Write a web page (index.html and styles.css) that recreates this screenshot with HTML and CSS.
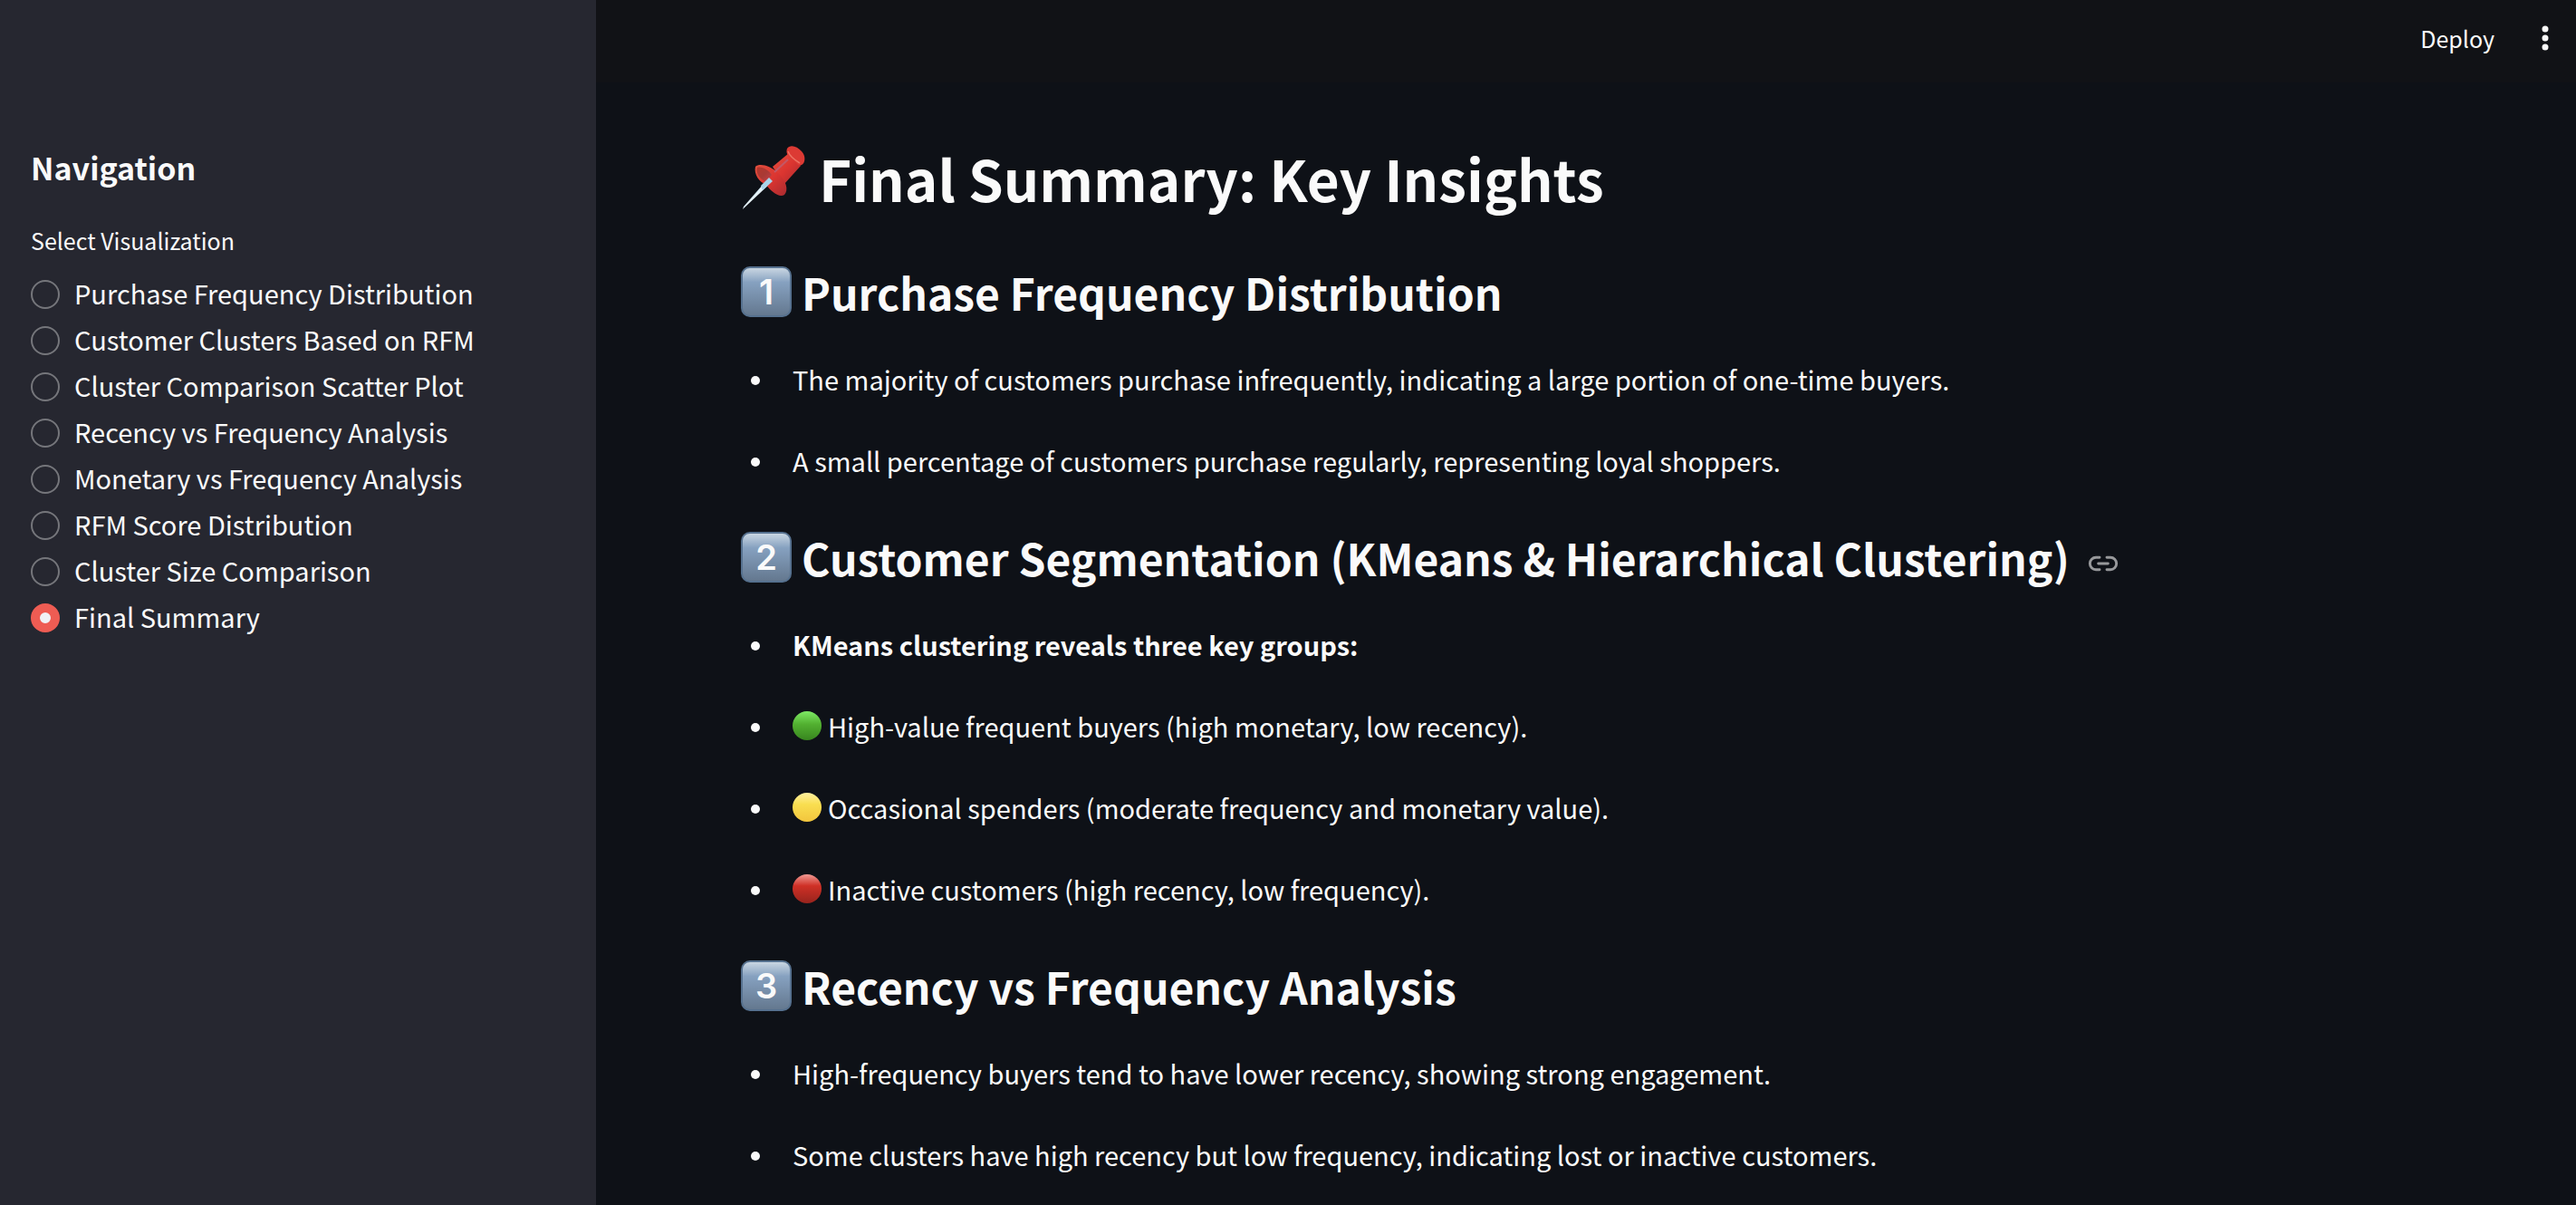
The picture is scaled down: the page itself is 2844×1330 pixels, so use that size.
FILE: index.html
```html
<!DOCTYPE html>
<html lang="en">
<head>
<meta charset="utf-8">
<meta name="viewport" content="width=device-width, initial-scale=1">
<title>Final Summary</title>
<link rel="stylesheet" href="styles.css">
</head>
<body>
<svg class="defs" width="0" height="0" aria-hidden="true">
  <defs>
    <linearGradient id="pin-red" x1="0" y1="0" x2="1" y2="1">
      <stop offset="0" stop-color="#e0503f"/><stop offset=".5" stop-color="#dc3530"/><stop offset="1" stop-color="#a92b30"/>
    </linearGradient>
    <linearGradient id="pin-cup" x1="0" y1="0" x2="1" y2="1">
      <stop offset="0" stop-color="#b5362c"/><stop offset=".5" stop-color="#a83a35"/><stop offset="1" stop-color="#c8404a"/>
    </linearGradient>
    <linearGradient id="pin-steel" x1="0" y1="0" x2="1" y2="1">
      <stop offset="0.3" stop-color="#9fd0ee"/><stop offset=".5" stop-color="#e8f4fa"/><stop offset="1" stop-color="#4a4038"/>
    </linearGradient>
  </defs>
</svg>
<div class="app">
  <aside class="sidebar">
    <h2 class="sidebar-title">Navigation</h2>
    <fieldset class="radio-group">
      <legend>Select Visualization</legend>
      <label class="radio"><input type="radio" name="view"><span>Purchase Frequency Distribution</span></label>
      <label class="radio"><input type="radio" name="view"><span>Customer Clusters Based on RFM</span></label>
      <label class="radio"><input type="radio" name="view"><span>Cluster Comparison Scatter Plot</span></label>
      <label class="radio"><input type="radio" name="view"><span>Recency vs Frequency Analysis</span></label>
      <label class="radio"><input type="radio" name="view"><span>Monetary vs Frequency Analysis</span></label>
      <label class="radio"><input type="radio" name="view"><span>RFM Score Distribution</span></label>
      <label class="radio"><input type="radio" name="view"><span>Cluster Size Comparison</span></label>
      <label class="radio"><input type="radio" name="view" checked><span>Final Summary</span></label>
    </fieldset>
  </aside>
  <div class="page">
    <header class="toolbar">
      <button class="deploy" type="button">Deploy</button>
      <button class="menu" type="button" aria-label="Main menu">
        <svg width="8" height="28" viewBox="0 0 8 28" fill="currentColor"><circle cx="4" cy="4" r="3.5"/><circle cx="4" cy="14" r="3.5"/><circle cx="4" cy="24" r="3.5"/></svg>
      </button>
    </header>
    <main class="content">
      <h1>
        <svg class="pin" width="72" height="72" viewBox="0 0 72 72" aria-hidden="true">
          <path d="M31 36 35 40 4 69 2 71 3 68Z" fill="url(#pin-steel)"/>
          <path d="M35 24 53 9 66 23 48 43Z" fill="url(#pin-red)"/>
          <path d="M16 24C20 20 32 22 41 31 50 39 53 50 48 55 42 59 32 50 28 44 20 41 14 32 16 24Z" fill="url(#pin-red)"/>
          <path d="M18 25C23 23 31 28 34 33L28 41C21 38 16 31 18 25Z" fill="url(#pin-cup)"/>
          <path d="M31 36 35 40 24 50 22 45Z" fill="#a9d3ea"/>
          <path d="M51 4C54-1 62 1 67 7 72 12 71 20 67 22 63 24 61 20 58 16 53 14 49 10 51 4Z" fill="#dc3a34"/>
          <path d="M52 7C54 13 60 17 65 20" fill="none" stroke="#ec7263" stroke-width="1.5"/>
          <path d="M37 30 52 16" fill="none" stroke="#b06a88" stroke-width="2" opacity=".6"/>
        </svg>
        <span>Final Summary: Key Insights</span>
      </h1>
      <section>
        <h2><span class="keycap">1</span><span>Purchase Frequency Distribution</span></h2>
        <ul>
          <li>The majority of customers purchase infrequently, indicating a large portion of one-time buyers.</li>
          <li>A small percentage of customers purchase regularly, representing loyal shoppers.</li>
        </ul>
      </section>
      <section>
        <h2><span class="keycap">2</span><span>Customer Segmentation (KMeans &amp; Hierarchical Clustering)</span>
          <a class="anchor" href="#segmentation" id="segmentation" aria-label="Link to this section">
            <svg width="32" height="32" viewBox="0 0 24 24" fill="none" stroke="currentColor" stroke-width="2.2" stroke-linecap="round"><path d="M15 7h3a5 5 0 0 1 0 10h-3M9 17H6A5 5 0 0 1 6 7h3M8 12h8"/></svg>
          </a>
        </h2>
        <ul>
          <li><strong>KMeans clustering reveals three key groups:</strong></li>
          <li><span class="ball green"></span>High-value frequent buyers (high monetary, low recency).</li>
          <li><span class="ball yellow"></span>Occasional spenders (moderate frequency and monetary value).</li>
          <li><span class="ball red"></span>Inactive customers (high recency, low frequency).</li>
        </ul>
      </section>
      <section>
        <h2><span class="keycap">3</span><span>Recency vs Frequency Analysis</span></h2>
        <ul>
          <li>High-frequency buyers tend to have lower recency, showing strong engagement.</li>
          <li>Some clusters have high recency but low frequency, indicating lost or inactive customers.</li>
        </ul>
      </section>
    </main>
  </div>
</div>
</body>
</html>
```
FILE: styles.css
```css
* { box-sizing: border-box; }
body {
  margin: 0;
  background: #0e1117;
  color: #fafafa;
  font: 29px/48px "Noto Sans CJK JP", "Noto Sans", sans-serif;
}
h1, h2, ul { margin: 0; padding: 0; }
.defs { position: absolute; }
.app { display: flex; height: 100vh; overflow: hidden; }

.sidebar { flex: 0 0 658px; padding: 162px 34px 0; background: #262730; }
.sidebar-title { font-size: 34px; line-height: 46px; }
.radio-group { margin: 0; padding: 0; border: 0; }
.radio-group legend { padding: 33px 0 10px; font-size: 25px; line-height: 48px; }
.radio { display: flex; align-items: center; gap: 16px; height: 51px; white-space: nowrap; }
.radio span { padding-bottom: 3px; }
.radio input {
  appearance: none;
  width: 32px;
  height: 32px;
  margin: 0;
  border: 2px solid #75767b;
  border-radius: 50%;
}
.radio input:checked { border: 10px solid #ee5c53; background: #f0f2f6; }

.page { flex: 1; min-width: 0; }
.toolbar {
  display: flex;
  align-items: center;
  justify-content: flex-end;
  gap: 52px;
  height: 91px;
  padding: 0 30px 8px 0;
  background: #111216;
}
.toolbar button { padding: 0; border: 0; background: none; color: inherit; font: inherit; }
.toolbar .deploy { font-size: 25px; }
.menu svg { display: block; }

.content { padding: 58px 160px 0; }
.content h1, .content h2 { display: flex; align-items: center; height: 94px; line-height: 92px; white-space: nowrap; }
.content h1 { gap: 14px; margin-bottom: 17px; font-size: 62px; }
.content h2 { gap: 11px; font-size: 48px; }
.content section { padding-top: 15px; }
.keycap {
  width: 56px;
  height: 56px;
  border: 2px solid #56718f;
  border-radius: 10px;
  background: linear-gradient(#c9d6e2, #86a1c0 30%, #64788f);
  font: 600 38px/52px "Inter", sans-serif;
  text-align: center;
}
.anchor { display: flex; margin: 14px 0 0 10px; color: #97989b; }
.anchor svg { overflow: visible; }
ul { padding-top: 4px; list-style: none; }
li { display: flex; align-items: center; height: 90px; white-space: nowrap; }
li::before { content: ""; width: 10px; height: 10px; margin: 4px 36px 0 11px; border-radius: 50%; background: #fafafa; }
.ball { width: 32px; height: 32px; margin-right: 7px; border-radius: 50%; }
.green { background: linear-gradient(#7eea65, #52b030 45%, #38861f); }
.yellow { background: linear-gradient(#fff0a0, #f9de50 40%, #f2c53d); }
.red { background: linear-gradient(#f09a94, #cf3026 40%, #97241d); }
```
